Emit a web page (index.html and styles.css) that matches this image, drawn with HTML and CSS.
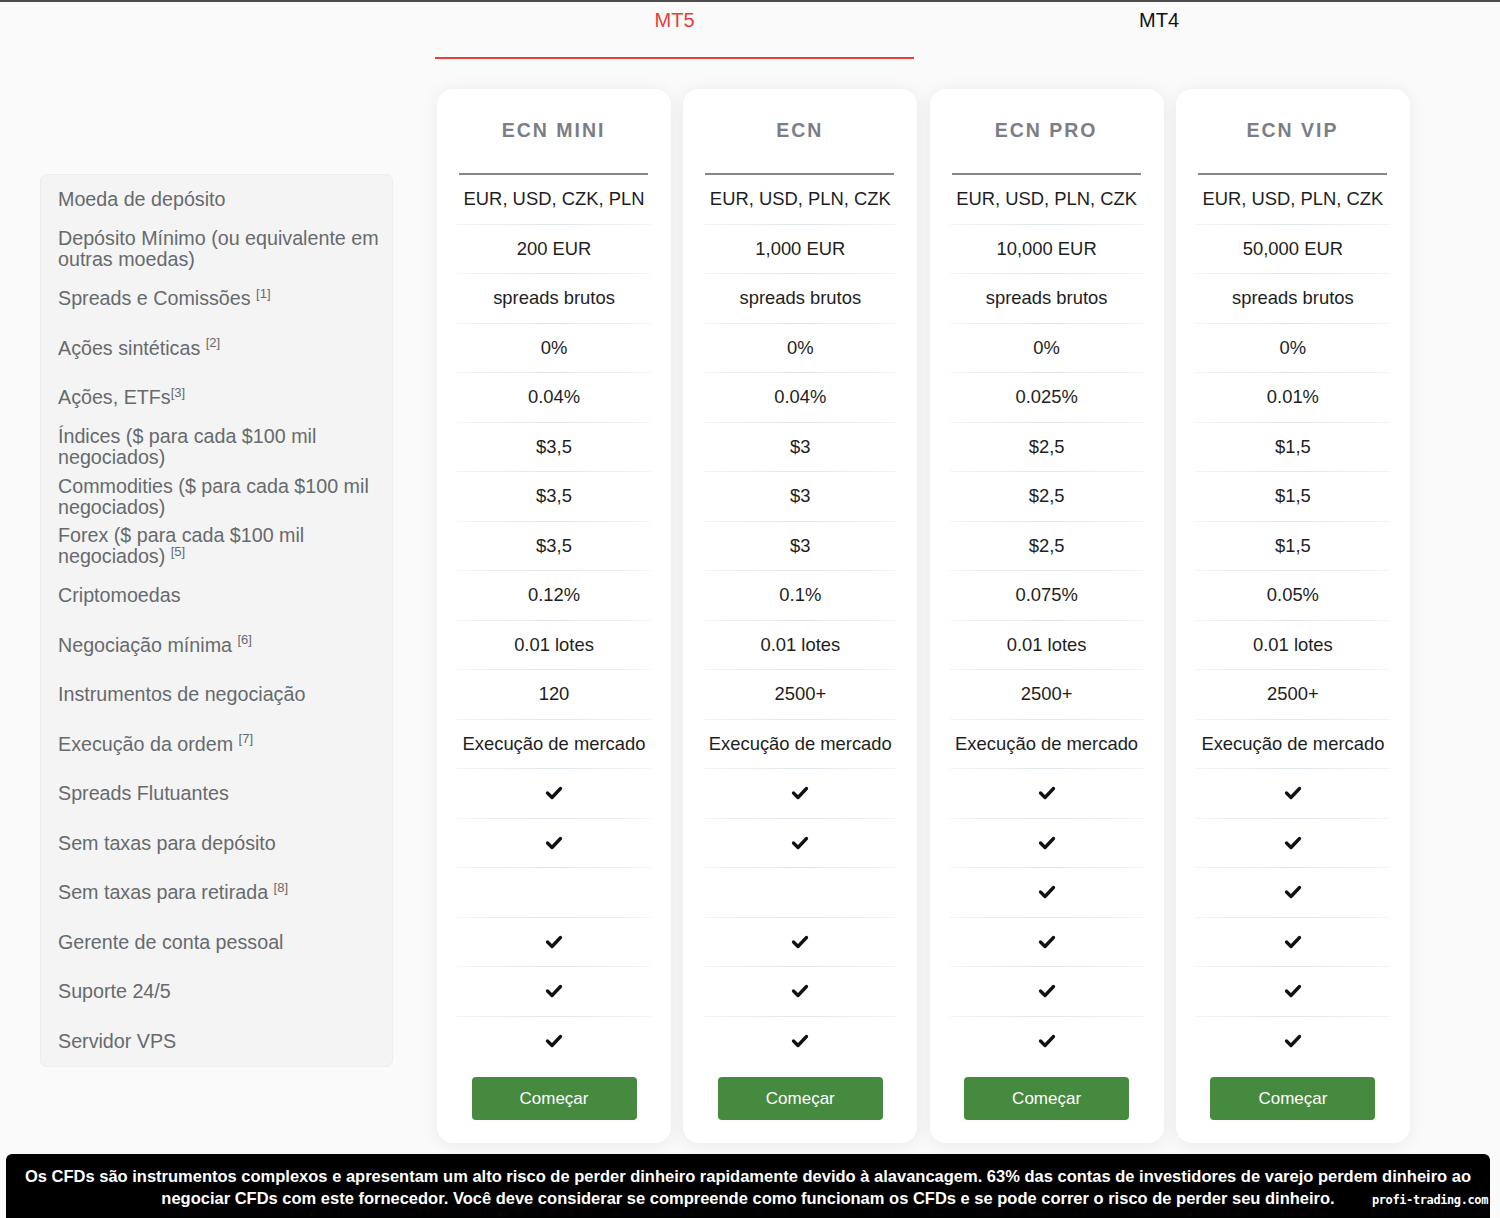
FILE: index.html
```html
<!DOCTYPE html>
<html lang="pt">
<head>
<meta charset="utf-8">
<title>Contas</title>
<link rel="stylesheet" href="styles.css">
</head>
<body>
<div class="tabs">
  <div class="tab tab-active">MT5</div>
  <div class="tab tab-mt4">MT4</div>
</div>
<div class="main">
  <div class="labels">
    <div class="lrow"><span>Moeda de depósito</span></div>
    <div class="lrow"><span>Depósito Mínimo (ou equivalente em outras moedas)</span></div>
    <div class="lrow"><span>Spreads e Comissões <sup>[1]</sup></span></div>
    <div class="lrow"><span>Ações sintéticas <sup>[2]</sup></span></div>
    <div class="lrow"><span>Ações, ETFs<sup>[3]</sup></span></div>
    <div class="lrow"><span>Índices ($ para cada $100 mil negociados)</span></div>
    <div class="lrow"><span>Commodities ($ para cada $100 mil negociados)</span></div>
    <div class="lrow"><span>Forex ($ para cada $100 mil negociados) <sup>[5]</sup></span></div>
    <div class="lrow"><span>Criptomoedas</span></div>
    <div class="lrow"><span>Negociação mínima <sup>[6]</sup></span></div>
    <div class="lrow"><span>Instrumentos de negociação</span></div>
    <div class="lrow"><span>Execução da ordem <sup>[7]</sup></span></div>
    <div class="lrow"><span>Spreads Flutuantes</span></div>
    <div class="lrow"><span>Sem taxas para depósito</span></div>
    <div class="lrow"><span>Sem taxas para retirada <sup>[8]</sup></span></div>
    <div class="lrow"><span>Gerente de conta pessoal</span></div>
    <div class="lrow"><span>Suporte 24/5</span></div>
    <div class="lrow"><span>Servidor VPS</span></div>
  </div>
  <div class="cards">
    <div class="card">
      <div class="card-title">ECN MINI</div>
      <div class="vrow">EUR, USD, CZK, PLN</div>
      <div class="vrow">200 EUR</div>
      <div class="vrow">spreads brutos</div>
      <div class="vrow">0%</div>
      <div class="vrow">0.04%</div>
      <div class="vrow">$3,5</div>
      <div class="vrow">$3,5</div>
      <div class="vrow">$3,5</div>
      <div class="vrow">0.12%</div>
      <div class="vrow">0.01 lotes</div>
      <div class="vrow">120</div>
      <div class="vrow">Execução de mercado</div>
      <div class="vrow"><svg class="check" viewBox="0 0 18 14"><polyline points="2.5,7 7,11.5 15.5,2.5"/></svg></div>
      <div class="vrow"><svg class="check" viewBox="0 0 18 14"><polyline points="2.5,7 7,11.5 15.5,2.5"/></svg></div>
      <div class="vrow"></div>
      <div class="vrow"><svg class="check" viewBox="0 0 18 14"><polyline points="2.5,7 7,11.5 15.5,2.5"/></svg></div>
      <div class="vrow"><svg class="check" viewBox="0 0 18 14"><polyline points="2.5,7 7,11.5 15.5,2.5"/></svg></div>
      <div class="vrow"><svg class="check" viewBox="0 0 18 14"><polyline points="2.5,7 7,11.5 15.5,2.5"/></svg></div>
      <div class="btn-wrap"><a class="btn">Começar</a></div>
    </div>
    <div class="card">
      <div class="card-title">ECN</div>
      <div class="vrow">EUR, USD, PLN, CZK</div>
      <div class="vrow">1,000 EUR</div>
      <div class="vrow">spreads brutos</div>
      <div class="vrow">0%</div>
      <div class="vrow">0.04%</div>
      <div class="vrow">$3</div>
      <div class="vrow">$3</div>
      <div class="vrow">$3</div>
      <div class="vrow">0.1%</div>
      <div class="vrow">0.01 lotes</div>
      <div class="vrow">2500+</div>
      <div class="vrow">Execução de mercado</div>
      <div class="vrow"><svg class="check" viewBox="0 0 18 14"><polyline points="2.5,7 7,11.5 15.5,2.5"/></svg></div>
      <div class="vrow"><svg class="check" viewBox="0 0 18 14"><polyline points="2.5,7 7,11.5 15.5,2.5"/></svg></div>
      <div class="vrow"></div>
      <div class="vrow"><svg class="check" viewBox="0 0 18 14"><polyline points="2.5,7 7,11.5 15.5,2.5"/></svg></div>
      <div class="vrow"><svg class="check" viewBox="0 0 18 14"><polyline points="2.5,7 7,11.5 15.5,2.5"/></svg></div>
      <div class="vrow"><svg class="check" viewBox="0 0 18 14"><polyline points="2.5,7 7,11.5 15.5,2.5"/></svg></div>
      <div class="btn-wrap"><a class="btn">Começar</a></div>
    </div>
    <div class="card">
      <div class="card-title">ECN PRO</div>
      <div class="vrow">EUR, USD, PLN, CZK</div>
      <div class="vrow">10,000 EUR</div>
      <div class="vrow">spreads brutos</div>
      <div class="vrow">0%</div>
      <div class="vrow">0.025%</div>
      <div class="vrow">$2,5</div>
      <div class="vrow">$2,5</div>
      <div class="vrow">$2,5</div>
      <div class="vrow">0.075%</div>
      <div class="vrow">0.01 lotes</div>
      <div class="vrow">2500+</div>
      <div class="vrow">Execução de mercado</div>
      <div class="vrow"><svg class="check" viewBox="0 0 18 14"><polyline points="2.5,7 7,11.5 15.5,2.5"/></svg></div>
      <div class="vrow"><svg class="check" viewBox="0 0 18 14"><polyline points="2.5,7 7,11.5 15.5,2.5"/></svg></div>
      <div class="vrow"><svg class="check" viewBox="0 0 18 14"><polyline points="2.5,7 7,11.5 15.5,2.5"/></svg></div>
      <div class="vrow"><svg class="check" viewBox="0 0 18 14"><polyline points="2.5,7 7,11.5 15.5,2.5"/></svg></div>
      <div class="vrow"><svg class="check" viewBox="0 0 18 14"><polyline points="2.5,7 7,11.5 15.5,2.5"/></svg></div>
      <div class="vrow"><svg class="check" viewBox="0 0 18 14"><polyline points="2.5,7 7,11.5 15.5,2.5"/></svg></div>
      <div class="btn-wrap"><a class="btn">Começar</a></div>
    </div>
    <div class="card">
      <div class="card-title">ECN VIP</div>
      <div class="vrow">EUR, USD, PLN, CZK</div>
      <div class="vrow">50,000 EUR</div>
      <div class="vrow">spreads brutos</div>
      <div class="vrow">0%</div>
      <div class="vrow">0.01%</div>
      <div class="vrow">$1,5</div>
      <div class="vrow">$1,5</div>
      <div class="vrow">$1,5</div>
      <div class="vrow">0.05%</div>
      <div class="vrow">0.01 lotes</div>
      <div class="vrow">2500+</div>
      <div class="vrow">Execução de mercado</div>
      <div class="vrow"><svg class="check" viewBox="0 0 18 14"><polyline points="2.5,7 7,11.5 15.5,2.5"/></svg></div>
      <div class="vrow"><svg class="check" viewBox="0 0 18 14"><polyline points="2.5,7 7,11.5 15.5,2.5"/></svg></div>
      <div class="vrow"><svg class="check" viewBox="0 0 18 14"><polyline points="2.5,7 7,11.5 15.5,2.5"/></svg></div>
      <div class="vrow"><svg class="check" viewBox="0 0 18 14"><polyline points="2.5,7 7,11.5 15.5,2.5"/></svg></div>
      <div class="vrow"><svg class="check" viewBox="0 0 18 14"><polyline points="2.5,7 7,11.5 15.5,2.5"/></svg></div>
      <div class="vrow"><svg class="check" viewBox="0 0 18 14"><polyline points="2.5,7 7,11.5 15.5,2.5"/></svg></div>
      <div class="btn-wrap"><a class="btn">Começar</a></div>
    </div>
  </div>
</div>
<div class="risk">
  <p class="risk-text">Os CFDs são instrumentos complexos e apresentam um alto risco de perder dinheiro rapidamente devido à alavancagem. 63% das contas de investidores de varejo perdem dinheiro ao negociar CFDs com este fornecedor. Você deve considerar se compreende como funcionam os CFDs e se pode correr o risco de perder seu dinheiro.</p>
  <span class="watermark">profi-trading.com</span>
</div>
</body>
</html>
```
FILE: styles.css
```css
* { box-sizing: border-box; }
html, body { margin: 0; padding: 0; }
body {
  background: #fafafa;
  border-top: 2px solid #4d4d4d;
  font-family: "Liberation Sans", Arial, sans-serif;
  color: #222;
  width: 1500px;
  height: 1218px;
  overflow: hidden;
}
.tabs {
  display: flex;
  margin-left: 435px;
}
.tab {
  font-size: 20px;
  line-height: 24px;
  text-align: center;
  padding-top: 6px;
  height: 57px;
  color: #111;
}
.tab-active {
  width: 479px;
  color: #e5403a;
  border-bottom: 2px solid #e5403a;
}
.tab-mt4 { width: 490px; }
.main {
  display: flex;
  align-items: flex-start;
  padding-left: 40px;
  margin-top: 30px;
}
.labels {
  width: 353px;
  margin-top: 85px;
  background: #f4f4f4;
  border: 1px solid #e9eef0;
  border-radius: 7px;
}
.lrow {
  height: 49.5px;
  display: flex;
  align-items: center;
  padding: 0 6px 0 17px;
  font-size: 19.7px;
  line-height: 21px;
  color: #666a6d;
}
.lrow sup {
  font-size: 13px;
  line-height: 0;
  vertical-align: super;
  position: relative;
  top: 0;
}
.cards {
  display: grid;
  grid-template-columns: repeat(4, 234px);
  column-gap: 12.3px;
  margin-left: 44px;
}
.card {
  background: #fff;
  border-radius: 16px;
  box-shadow: 0 2px 18px rgba(0, 0, 0, 0.07);
  padding: 0 20px 23px;
}
.card-title {
  height: 86px;
  display: flex;
  align-items: center;
  justify-content: center;
  padding-bottom: 2px;
  margin: 0 3px 0 2px;
  border-bottom: 2px solid #85878d;
  font-size: 19.5px;
  font-weight: bold;
  letter-spacing: 2px;
  color: #7b7e86;
}
.vrow {
  height: 49.5px;
  display: flex;
  align-items: center;
  justify-content: center;
  font-size: 18.4px;
  color: #1e1e1e;
  border-bottom: 1px solid transparent;
  border-image: linear-gradient(90deg, #f3f5f7, #dfe6eb 50%, #f3f5f7) 1;
}
.vrow:nth-child(19) { border-bottom: 0; border-image: none; }
.check {
  width: 18px;
  height: 14px;
}
.check polyline {
  fill: none;
  stroke: #111;
  stroke-width: 3.3;
  stroke-linecap: round;
  stroke-linejoin: round;
}
.btn-wrap {
  display: flex;
  justify-content: center;
  margin-top: 11px;
}
.btn {
  width: 165px;
  height: 43px;
  display: flex;
  align-items: center;
  justify-content: center;
  background: #468a40;
  color: #fff;
  border-radius: 4px;
  font-size: 17px;
}
.risk {
  position: relative;
  margin: 11px 10px 0 6px;
  height: 64px;
  background: #000;
  border-radius: 6px 6px 0 0;
  padding: 11px 10px 0;
}
.risk-text {
  margin: 0;
  color: #fff;
  font-weight: bold;
  font-size: 16.5px;
  line-height: 22px;
  text-align: center;
}
.watermark {
  position: absolute;
  right: 2px;
  top: 39px;
  line-height: 14px;
  color: #fff;
  font-family: "DejaVu Sans Mono", monospace;
  font-weight: bold;
  font-size: 12px;
  letter-spacing: -0.4px;
}
```
